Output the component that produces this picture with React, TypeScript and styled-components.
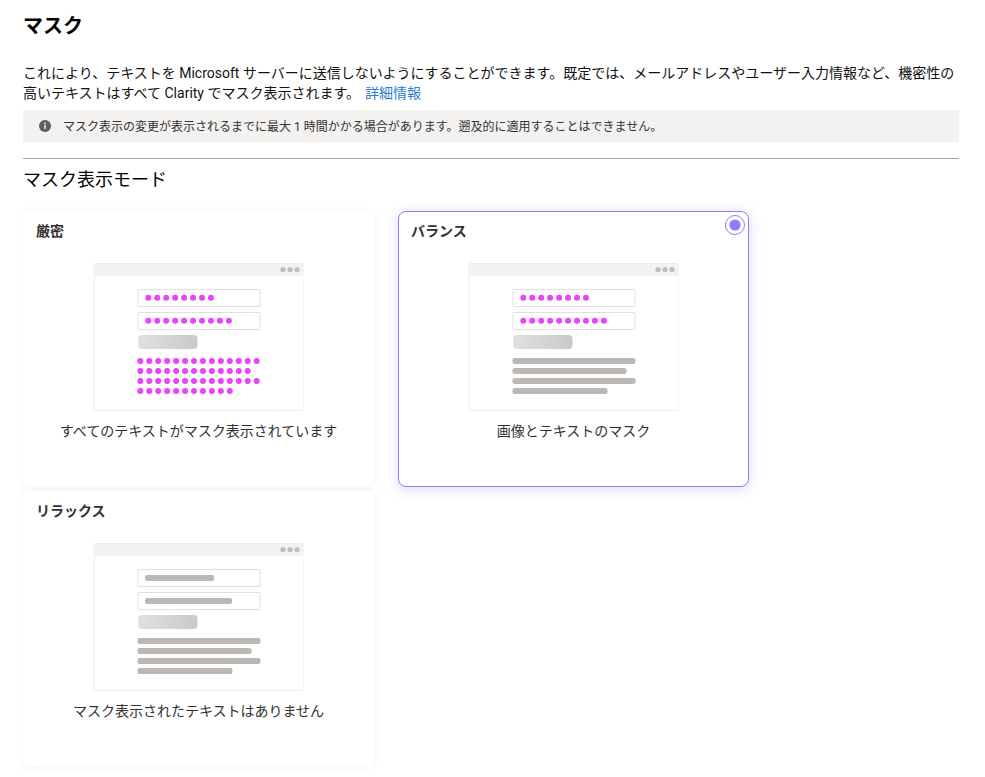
import React from 'react';
import styled, { createGlobalStyle } from 'styled-components';

const GlobalStyle = createGlobalStyle`
  html, body {
    margin: 0;
    padding: 0;
    background: #fff;
    font-family: Roboto, "Noto Sans CJK JP", sans-serif;
  }
`;

const Page = styled.main`
  box-sizing: border-box;
  width: 985px;
  height: 777px;
  padding: 12px 26px 0 23px;
  overflow: hidden;
`;

const Title = styled.h1`
  margin: 0;
  font-size: 20px;
  line-height: 28px;
  font-weight: 700;
  color: #000;
`;

const Description = styled.p`
  margin: 23px 0 0;
  font-size: 14px;
  line-height: 20px;
  color: #111;

  a {
    margin-left: 5px;
    color: #2b7cd3;
    text-decoration: none;
  }
`;

const Notice = styled.div`
  display: flex;
  align-items: center;
  gap: 12px;
  height: 32px;
  margin-top: 7px;
  padding-left: 16px;
  background: #f3f2f1;
  font-size: 12px;
  color: #323130;
`;

const NoticeText = styled.span`
  margin-bottom: 2px;
`;

const Divider = styled.hr`
  margin: 16px 0 0;
  border: 0;
  border-top: 1px solid #a8a6a4;
`;

const Heading = styled.h2`
  margin: 9px 0 0;
  font-size: 18px;
  line-height: 24px;
  font-weight: 400;
  color: #000;
`;

const CardGrid = styled.div`
  display: flex;
  flex-wrap: wrap;
  gap: 4px 24px;
  margin-top: 19px;
`;

const Card = styled.div<{ $selected?: boolean }>`
  position: relative;
  box-sizing: border-box;
  width: 351px;
  height: 276px;
  padding: 9px 12px 0;
  border-radius: 8px;
  background: #fff;
  border: 1px solid ${(p) => (p.$selected ? '#8c7cff' : 'transparent')};
  box-shadow: ${(p) =>
    p.$selected ? '0 2px 14px rgba(120, 100, 255, 0.24)' : '0 1px 8px rgba(120, 100, 255, 0.09)'};
`;

const CardTitle = styled.h3`
  margin: 0;
  font-size: 14px;
  line-height: 20px;
  font-weight: 700;
  color: #323130;
`;

const Illustration = styled.svg`
  display: block;
  margin: 22px auto 0;
`;

const Caption = styled.p`
  margin: 10px 0 0;
  font-size: 14px;
  line-height: 20px;
  text-align: center;
  color: #323130;
`;

const RadioMark = styled.svg`
  position: absolute;
  top: 2px;
  right: 2px;
`;

const PINK = '#e844fb';
const GREY = '#bcb8b4';

const Dots: React.FC<{ x: number; y: number; count: number }> = ({ x, y, count }) => (
  <>
    {Array.from({ length: count }, (_, i) => (
      <circle key={i} cx={x + i * 8.95} cy={y} r={3} fill={PINK} />
    ))}
  </>
);

const Bar: React.FC<{ x: number; y: number; end: number }> = ({ x, y, end }) => (
  <rect x={x} y={y} width={end - x} height={6} rx={2} fill={GREY} />
);

const Browser: React.FC<{ fields: 'dots' | 'bars'; body: 'dots' | 'bars' }> = ({ fields, body }) => (
  <Illustration width={211} height={148} viewBox="0 0 211 148">
    <defs>
      <linearGradient id="button-fill" x1="0" y1="0" x2="1" y2="0">
        <stop offset="0" stopColor="#e1e0df" />
        <stop offset="1" stopColor="#cac9c8" />
      </linearGradient>
    </defs>
    <rect x={1} y={0.5} width={210} height={147} rx={2} fill="#fff" stroke="#edebe9" />
    <path d="M1.5 3a2 2 0 0 1 2-2h205a2 2 0 0 1 2 2v10H1.5z" fill="#f3f2f1" />
    <circle cx={190} cy={6.5} r={2.6} fill="#bfbdbb" />
    <circle cx={197} cy={6.5} r={2.6} fill="#bfbdbb" />
    <circle cx={204} cy={6.5} r={2.6} fill="#bfbdbb" />

    <rect x={45} y={26.5} width={122} height={17} rx={1} fill="#fff" stroke="#e1dfdd" />
    <rect x={45} y={49.5} width={122} height={17} rx={1} fill="#fff" stroke="#e1dfdd" />
    {fields === 'dots' ? (
      <>
        <Dots x={55.3} y={34.7} count={8} />
        <Dots x={55.3} y={57.7} count={10} />
      </>
    ) : (
      <>
        <Bar x={52} y={32} end={121} />
        <Bar x={52} y={55} end={139} />
      </>
    )}
    <rect x={45} y={72} width={59.5} height={14} rx={4} fill="url(#button-fill)" />

    {body === 'dots' ? (
      <>
        <Dots x={47.3} y={98} count={14} />
        <Dots x={47.3} y={108} count={13} />
        <Dots x={47.3} y={118} count={14} />
        <Dots x={47.3} y={128} count={11} />
      </>
    ) : (
      <>
        <Bar x={44.5} y={95} end={167.5} />
        <Bar x={44.5} y={105} end={158.5} />
        <Bar x={44.5} y={115} end={167.5} />
        <Bar x={44.5} y={125} end={139.5} />
      </>
    )}
  </Illustration>
);

const InfoIcon: React.FC = () => (
  <svg width={12} height={12} viewBox="0 0 12 12" aria-hidden="true">
    <circle cx={6} cy={6} r={6} fill="#605e5c" />
    <rect x={5.3} y={5} width={1.4} height={4} fill="#f3f2f1" />
    <circle cx={6} cy={3.4} r={0.9} fill="#f3f2f1" />
  </svg>
);

const modes = [
  { title: '厳密', caption: 'すべてのテキストがマスク表示されています', fields: 'dots', body: 'dots' },
  { title: 'バランス', caption: '画像とテキストのマスク', fields: 'dots', body: 'bars', selected: true },
  { title: 'リラックス', caption: 'マスク表示されたテキストはありません', fields: 'bars', body: 'bars' },
] as const;

export default function App() {
  return (
    <>
      <GlobalStyle />
      <Page>
        <Title>マスク</Title>
        <Description>
          これにより、テキストを Microsoft サーバーに送信しないようにすることができます。既定では、メールアドレスやユーザー入力情報など、機密性の高いテキストはすべて Clarity でマスク表示されます。
          <a href="#more">詳細情報</a>
        </Description>
        <Notice>
          <InfoIcon />
          <NoticeText>マスク表示の変更が表示されるまでに最大 1 時間かかる場合があります。遡及的に適用することはできません。</NoticeText>
        </Notice>
        <Divider />
        <Heading>マスク表示モード</Heading>
        <CardGrid>
          {modes.map((mode) => {
            const selected = 'selected' in mode;
            return (
              <Card key={mode.title} $selected={selected}>
                <CardTitle>{mode.title}</CardTitle>
                <Browser fields={mode.fields} body={mode.body} />
                <Caption>{mode.caption}</Caption>
                {selected && (
                  <RadioMark width={22} height={22} viewBox="0 0 22 22">
                    <circle cx={11} cy={11} r={9.5} fill="#fff" stroke="#8c7cff" />
                    <circle cx={11} cy={11} r={5.6} fill="#8c7cff" />
                  </RadioMark>
                )}
              </Card>
            );
          })}
        </CardGrid>
      </Page>
    </>
  );
}
